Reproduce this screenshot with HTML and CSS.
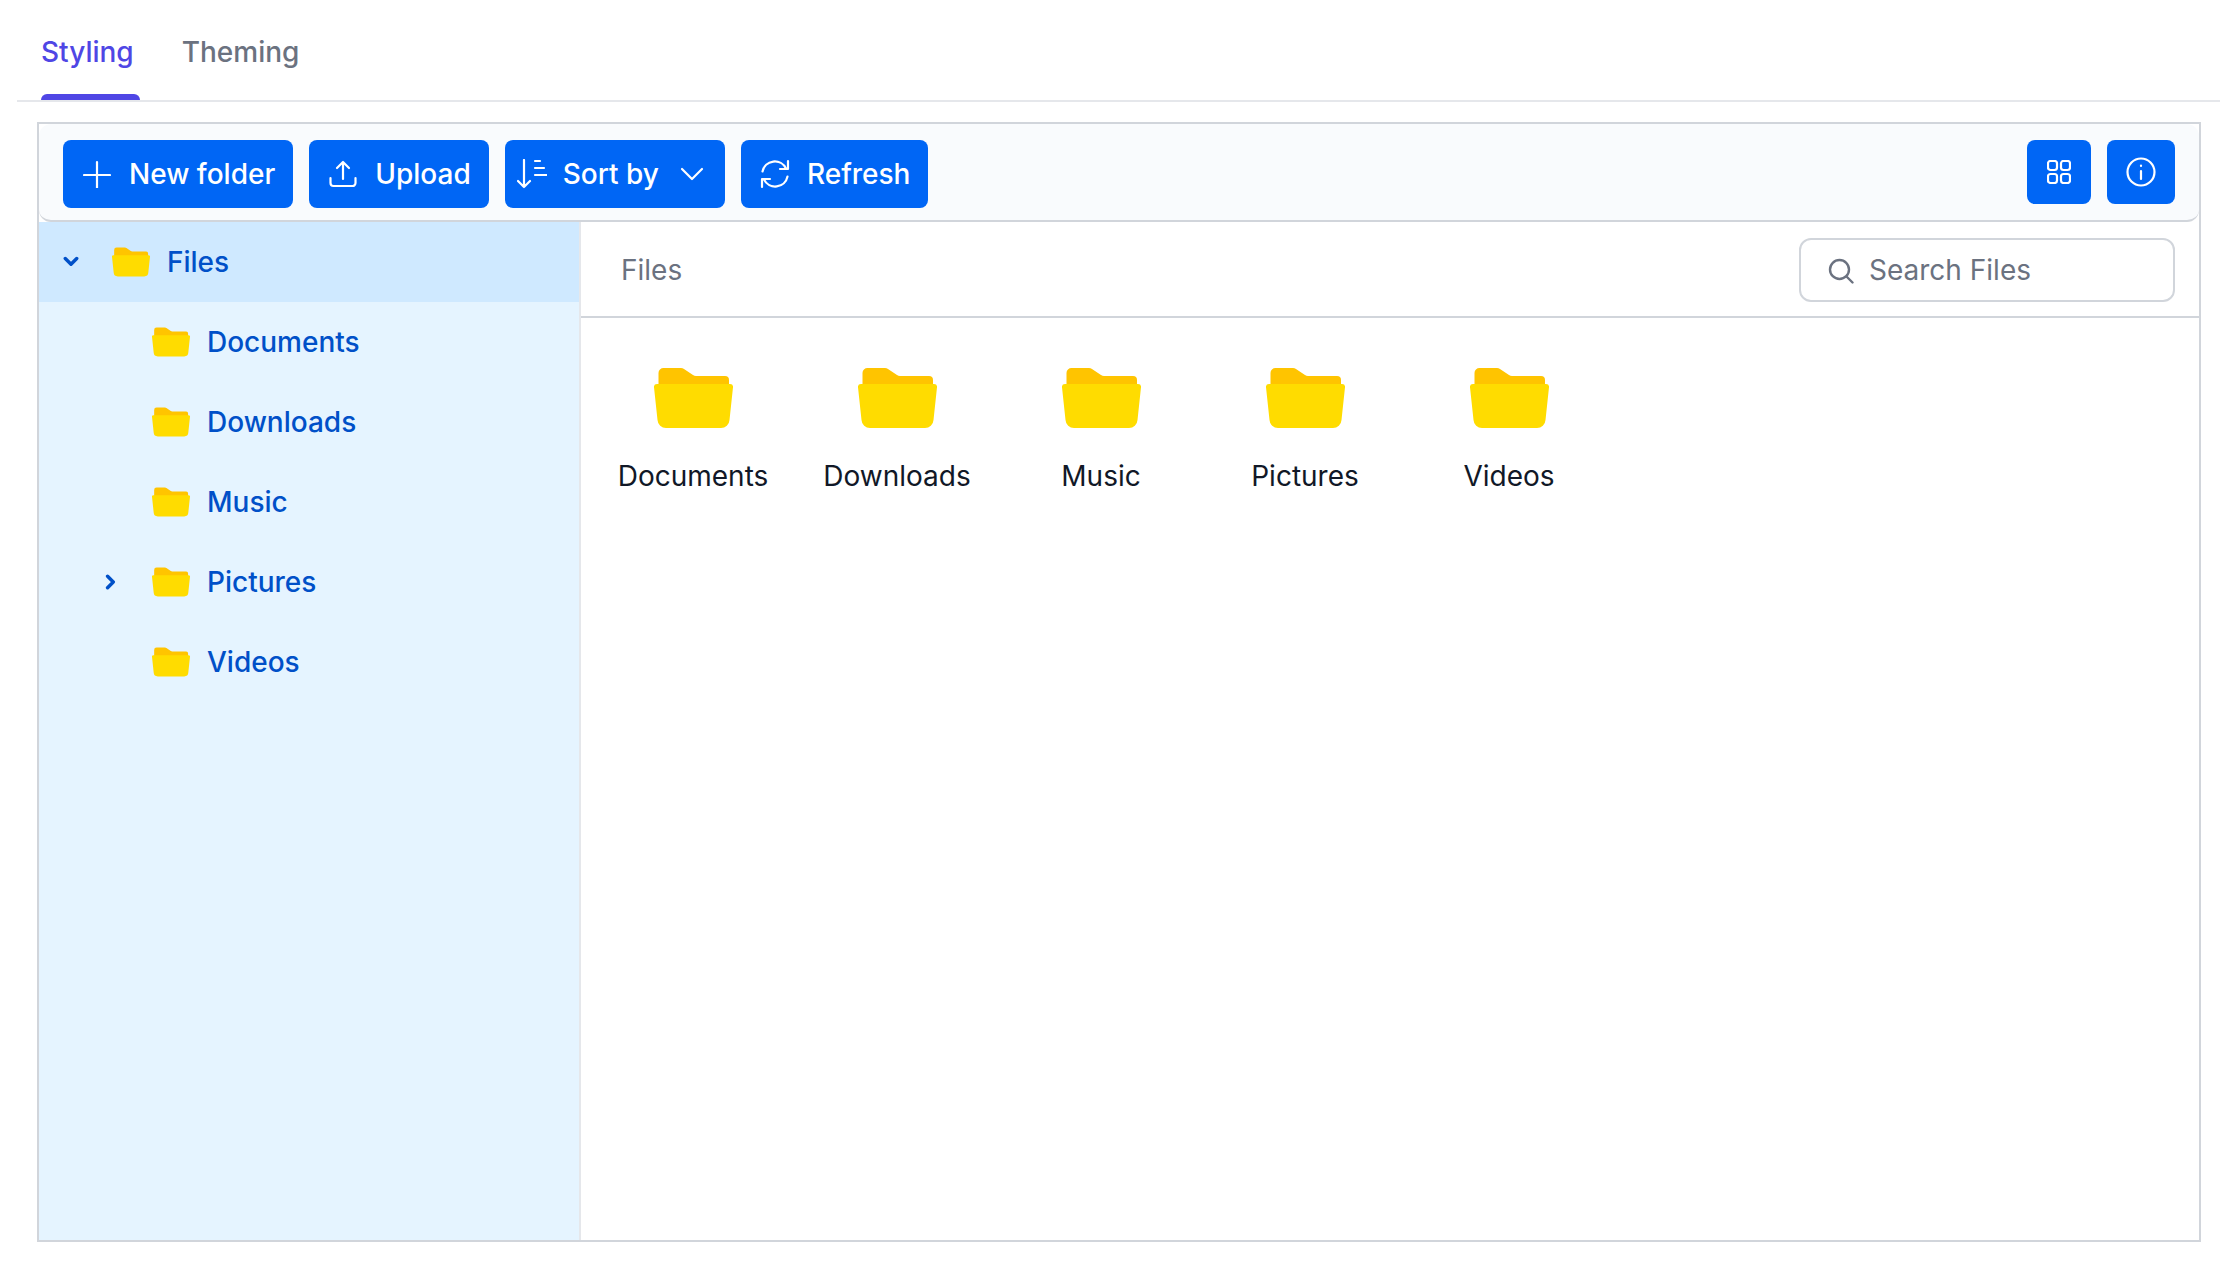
FILE: index.html
```html
<!DOCTYPE html>
<html lang="en">
<head>
    <meta charset="UTF-8">
    <title>File Manager</title>
    <link rel="stylesheet" href="styles.css">
</head>
<body>
    <svg class="defs" width="0" height="0">
        <symbol id="folder" viewBox="0 0 79 60">
            <path fill="#ffc400" d="M4.500 5a5 5 0 0 1 5-5H27a6 6 0 0 1 3 1l9 6a6 6 0 0 0 3 1h29a4 4 0 0 1 4 4v10H4.500z"/>
            <path fill="#ffdc00" d="M3 16h73a3 3 0 0 1 3 3.300L75.500 52a8.500 8.500 0 0 1-8.500 8H12a8.500 8.500 0 0 1-8.500-8L0 19.300A3 3 0 0 1 3 16z"/>
        </symbol>
    </svg>

    <div class="tabs">
        <a class="tab active" href="#">Styling</a>
        <a class="tab" href="#">Theming</a>
    </div>

    <div class="manager">
        <div class="toolbar">
            <button class="btn">
                <svg class="icon" viewBox="0 0 28 28"><path d="M14 2v26M1 15h26"/></svg>
                <span>New folder</span>
            </button>
            <button class="btn">
                <svg class="icon" viewBox="0 0 28 28"><path d="M14 19V2M8 8l6-6 6 6M1.500 18v5a3 3 0 0 0 3 3h19a3 3 0 0 0 3-3v-5"/></svg>
                <span>Upload</span>
            </button>
            <button class="btn sort">
                <svg class="icon" viewBox="0 0 30 30"><path d="M7 1v27M1 22l6 6 6-6M18 2h5M18 9h9M18 16h13"/></svg>
                <span>Sort by</span>
                <svg class="icon chevron" viewBox="0 0 24 24"><path d="M2 7l10 10L22 7"/></svg>
            </button>
            <button class="btn refresh">
                <svg class="icon" viewBox="0 0 30 30"><path d="M2.500 12.500A12.500 12.500 0 0 1 26 9.500M28 2v8h-8M27.500 17.500A12.500 12.500 0 0 1 4 20.500M2 28v-8h8"/></svg>
                <span>Refresh</span>
            </button>
            <div class="toolbar-right">
                <button class="btn square">
                    <svg class="icon" viewBox="0 0 24 24"><rect x="1" y="1" width="9" height="9" rx="2.500"/><rect x="14" y="1" width="9" height="9" rx="2.500"/><rect x="1" y="14" width="9" height="9" rx="2.500"/><rect x="14" y="14" width="9" height="9" rx="2.500"/></svg>
                </button>
                <button class="btn square info">
                    <svg class="icon" viewBox="0 0 30 30"><circle cx="15" cy="15" r="13.500"/><path d="M15 14v8M15 8.500v.5"/></svg>
                </button>
            </div>
        </div>

        <div class="content">
            <ul class="tree">
                <li class="tree-row selected">
                    <svg class="caret" viewBox="0 0 14 14"><path d="M2 4l5 5 5-5"/></svg>
                    <svg class="tree-folder"><use href="#folder"/></svg>
                    <span>Files</span>
                </li>
                <li class="tree-row child">
                    <span class="caret"></span>
                    <svg class="tree-folder"><use href="#folder"/></svg>
                    <span>Documents</span>
                </li>
                <li class="tree-row child">
                    <span class="caret"></span>
                    <svg class="tree-folder"><use href="#folder"/></svg>
                    <span>Downloads</span>
                </li>
                <li class="tree-row child">
                    <span class="caret"></span>
                    <svg class="tree-folder"><use href="#folder"/></svg>
                    <span>Music</span>
                </li>
                <li class="tree-row child">
                    <svg class="caret" viewBox="0 0 14 14"><path d="M4 2l5 5-5 5"/></svg>
                    <svg class="tree-folder"><use href="#folder"/></svg>
                    <span>Pictures</span>
                </li>
                <li class="tree-row child">
                    <span class="caret"></span>
                    <svg class="tree-folder"><use href="#folder"/></svg>
                    <span>Videos</span>
                </li>
            </ul>

            <div class="main">
                <div class="breadcrumb">
                    <span>Files</span>
                    <label class="search">
                        <svg class="search-icon" viewBox="0 0 26 26"><circle cx="11.500" cy="11.500" r="9.500"/><path d="M18.500 18.500l6 6"/></svg>
                        <input type="text" placeholder="Search Files">
                    </label>
                </div>
                <div class="grid">
                    <div class="item"><svg class="item-folder"><use href="#folder"/></svg><span>Documents</span></div>
                    <div class="item"><svg class="item-folder"><use href="#folder"/></svg><span>Downloads</span></div>
                    <div class="item"><svg class="item-folder"><use href="#folder"/></svg><span>Music</span></div>
                    <div class="item"><svg class="item-folder"><use href="#folder"/></svg><span>Pictures</span></div>
                    <div class="item"><svg class="item-folder"><use href="#folder"/></svg><span>Videos</span></div>
                </div>
            </div>
        </div>
    </div>
</body>
</html>
```

FILE: styles.css
```css
/* Page */
body {
    margin: 0;
    padding: 0 35px 0 17px;
    height: 1280px;
    box-sizing: border-box;
    background-color: #ffffff;
    font-family: Inter, "Liberation Sans", sans-serif;
    font-size: 28px;
    overflow: hidden;
}

.defs {
    position: absolute;
}

/* Tabs */
.tabs {
    display: flex;
    gap: 42px;
    height: 100px;
    padding-left: 24px;
    border-bottom: 2px solid #e5e7eb;
    margin-right: -19px;
}

.tab {
    position: relative;
    display: flex;
    align-items: center;
    height: 100px;
    padding: 4px 6px 0 0;
    box-sizing: border-box;
    color: #6b7280;
    font-weight: 500;
    text-decoration: none;
}

.tab.active {
    color: #4f46e5;
}

.tab.active::after {
    content: "";
    position: absolute;
    left: 0;
    right: 0;
    bottom: 0;
    height: 6px;
    border-radius: 6px 6px 0 0;
    background-color: #4f46e5;
}

/* File manager box */
.manager {
    display: flex;
    flex-direction: column;
    height: 1120px;
    margin: 20px 0 0 20px;
    box-sizing: border-box;
    border: 2px solid #d1d5db;
}

.toolbar {
    display: flex;
    gap: 16px;
    height: 98px;
    padding: 16px 24px 0;
    box-sizing: border-box;
    background-color: #f9fbfd;
    border-bottom: 2px solid #d1d5db;
    border-radius: 12px;
}

.toolbar-right {
    display: flex;
    gap: 16px;
    margin-left: auto;
}

.btn {
    display: flex;
    align-items: center;
    gap: 18px;
    height: 68px;
    padding: 0 18px 0 20px;
    border: none;
    border-radius: 8px;
    background-color: #0066f5;
    color: #ffffff;
    font-family: inherit;
    font-size: 28px;
    font-weight: 500;
}

.btn .icon {
    width: 28px;
    height: 28px;
    fill: none;
    stroke: #ffffff;
    stroke-width: 2.200;
    stroke-linecap: round;
    stroke-linejoin: round;
}

.btn.sort {
    gap: 16px;
    padding: 0 21px 0 12px;
}

.btn.sort .icon {
    width: 30px;
    height: 30px;
}

.btn.sort .chevron {
    width: 24px;
    height: 24px;
    margin-left: 5px;
}

.btn.refresh .icon {
    width: 30px;
    height: 30px;
    margin: 0 -1px;
}

.btn.square {
    justify-content: center;
    width: 64px;
    height: 64px;
    padding: 0;
}

.btn.square .icon {
    width: 24px;
    height: 24px;
}

.btn.square.info {
    width: 68px;
}

.btn.square.info .icon {
    width: 30px;
    height: 30px;
}

/* Sidebar tree */
.content {
    display: flex;
    flex: 1;
    min-height: 0;
}

.tree {
    width: 542px;
    margin: 0;
    padding: 0;
    box-sizing: border-box;
    list-style-type: none;
    background-color: #e5f4ff;
    border-right: 2px solid #e5e7eb;
}

.tree-row {
    display: flex;
    align-items: center;
    height: 80px;
    padding-left: 24px;
    color: #0050c8;
    font-weight: 500;
}

.tree-row.selected {
    background-color: #cfe9ff;
}

.tree-row.child {
    padding-left: 64px;
}

.caret {
    width: 16px;
    height: 16px;
    margin-right: 33px;
    fill: none;
    stroke: #0050c8;
    stroke-width: 3;
    stroke-linecap: round;
    stroke-linejoin: round;
}

.tree-folder {
    width: 38px;
    height: 30px;
    margin-right: 17px;
}

/* Main area */
.main {
    flex: 1;
    min-width: 0;
}

.breadcrumb {
    display: flex;
    align-items: center;
    justify-content: space-between;
    height: 96px;
    padding: 2px 24px 0 40px;
    box-sizing: border-box;
    border-bottom: 2px solid #d1d5db;
    color: #6b7280;
}

.search {
    display: flex;
    align-items: center;
    gap: 15px;
    width: 376px;
    height: 64px;
    padding-left: 27px;
    box-sizing: border-box;
    border: 2px solid #d1d5db;
    border-radius: 12px;
    background-color: #ffffff;
}

.search-icon {
    width: 26px;
    height: 26px;
    margin-top: 2px;
    fill: none;
    stroke: #6b7280;
    stroke-width: 2.400;
    stroke-linecap: round;
}

.search input {
    flex: 1;
    min-width: 0;
    padding: 0;
    border: none;
    outline: none;
    background: none;
    font-family: inherit;
    font-size: 28px;
}

.search input::placeholder {
    color: #6b7280;
    opacity: 1;
}

.grid {
    display: flex;
    padding: 50px 10px 0;
}

.item {
    display: flex;
    flex-direction: column;
    align-items: center;
    width: 204px;
    color: #111827;
}

.item-folder {
    width: 79px;
    height: 60px;
    margin-bottom: 31px;
}
```
